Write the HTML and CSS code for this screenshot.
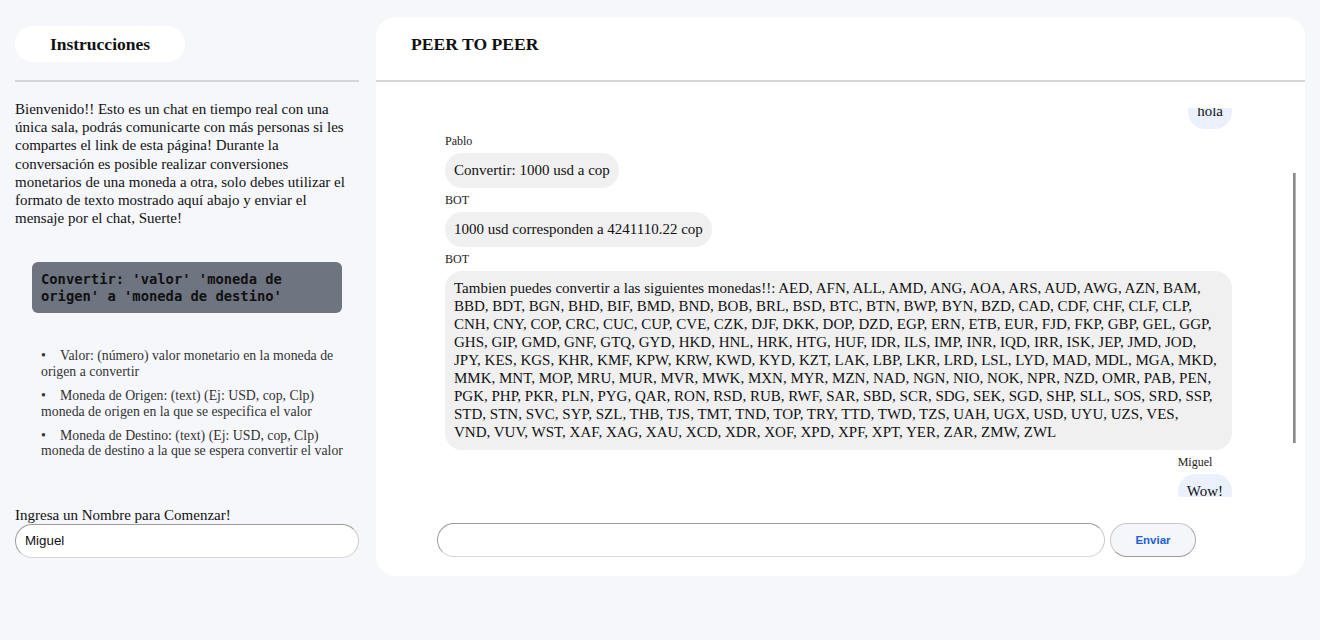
FILE: index.html
```html
<!DOCTYPE html>
<html lang="es">
<head>
<meta charset="utf-8">
<title>Peer to Peer</title>
<link rel="stylesheet" href="styles.css">
</head>
<body>
<div class="page">
  <aside class="sidebar">
    <h3 class="pill">Instrucciones</h3>
    <div class="rule"></div>
    <p class="intro">Bienvenido!! Esto es un chat en tiempo real con una única sala, podrás comunicarte con más personas si les compartes el link de esta página! Durante la conversación es posible realizar conversiones monetarios de una moneda a otra, solo debes utilizar el formato de texto mostrado aquí abajo y enviar el mensaje por el chat, Suerte!</p>
    <pre class="code">Convertir: 'valor' 'moneda de origen' a 'moneda de destino'</pre>
    <ul class="rules">
      <li>Valor: (número) valor monetario en la moneda de origen a convertir</li>
      <li>Moneda de Origen: (text) (Ej: USD, cop, Clp) moneda de origen en la que se especifica el valor</li>
      <li>Moneda de Destino: (text) (Ej: USD, cop, Clp) moneda de destino a la que se espera convertir el valor</li>
    </ul>
    <label class="name-label" for="name">Ingresa un Nombre para Comenzar!</label>
    <input class="name-input" id="name" type="text" value="Miguel">
  </aside>
  <main class="chat">
    <header class="chat-head"><h3 class="chat-title">PEER TO PEER</h3></header>
    <div class="rule"></div>
    <div class="msg-wrap">
      <div class="messages" id="messages">
        <div class="msg me"><span class="who">Miguel</span><div class="bubble">hola</div></div>
        <div class="msg"><span class="who">Pablo</span><div class="bubble">Convertir: 1000 usd a cop</div></div>
        <div class="msg"><span class="who">BOT</span><div class="bubble">1000 usd corresponden a 4241110.22 cop</div></div>
        <div class="msg"><span class="who">BOT</span><div class="bubble">Tambien puedes convertir a las siguientes monedas!!: AED, AFN, ALL, AMD, ANG, AOA, ARS, AUD, AWG, AZN, BAM, BBD, BDT, BGN, BHD, BIF, BMD, BND, BOB, BRL, BSD, BTC, BTN, BWP, BYN, BZD, CAD, CDF, CHF, CLF, CLP, CNH, CNY, COP, CRC, CUC, CUP, CVE, CZK, DJF, DKK, DOP, DZD, EGP, ERN, ETB, EUR, FJD, FKP, GBP, GEL, GGP, GHS, GIP, GMD, GNF, GTQ, GYD, HKD, HNL, HRK, HTG, HUF, IDR, ILS, IMP, INR, IQD, IRR, ISK, JEP, JMD, JOD, JPY, KES, KGS, KHR, KMF, KPW, KRW, KWD, KYD, KZT, LAK, LBP, LKR, LRD, LSL, LYD, MAD, MDL, MGA, MKD, MMK, MNT, MOP, MRU, MUR, MVR, MWK, MXN, MYR, MZN, NAD, NGN, NIO, NOK, NPR, NZD, OMR, PAB, PEN, PGK, PHP, PKR, PLN, PYG, QAR, RON, RSD, RUB, RWF, SAR, SBD, SCR, SDG, SEK, SGD, SHP, SLL, SOS, SRD, SSP, STD, STN, SVC, SYP, SZL, THB, TJS, TMT, TND, TOP, TRY, TTD, TWD, TZS, UAH, UGX, USD, UYU, UZS, VES,<br>VND, VUV, WST, XAF, XAG, XAU, XCD, XDR, XOF, XPD, XPF, XPT, YER, ZAR, ZMW, ZWL</div></div>
        <div class="msg me"><span class="who">Miguel</span><div class="bubble">Wow!</div></div>
      </div>
      <div class="scroll-thumb"></div>
    </div>
    <form class="composer">
      <input class="composer-input" type="text">
      <button class="send" type="button">Enviar</button>
    </form>
  </main>
</div>
<script src="script.js"></script>
</body>
</html>
```
FILE: styles.css
```css
* { box-sizing: border-box; }
body {
  margin: 0;
  background: #f6f7fb;
  font-family: "Liberation Serif", "Times New Roman", serif;
  font-size: 15px;
  line-height: 18px;
  color: #111;
}
.page {
  display: flex;
  gap: 17px;
  padding: 17px 15px;
}
.sidebar {
  width: 344px;
  flex: none;
  display: flex;
  flex-direction: column;
}
.pill {
  margin: 9px 0 0;
  width: 170px;
  height: 36px;
  border-radius: 18px;
  background: #fff;
  font-size: 17.5px;
  font-weight: bold;
  line-height: 36px;
  text-align: center;
}
.rule {
  height: 2px;
  background: #d5d6d8;
  flex: none;
}
.sidebar .rule { margin-top: 18px; }
.intro {
  margin: 18px 9px 0 0;
  font-size: 15px;
  line-height: 18.2px;
}
.code {
  margin: 35px 17px 0;
  padding: 9px 9px 8px;
  background: #6e7480;
  border-radius: 6px;
  font-family: "DejaVu Sans Mono", "Liberation Mono", monospace;
  font-weight: bold;
  font-size: 13.8px;
  line-height: 17px;
  color: #111;
  white-space: pre-wrap;
}
.rules {
  list-style: none;
  margin: 35px 8px 0 26px;
  padding: 0;
  font-size: 13.8px;
  line-height: 15.4px;
  color: #333;
}
.rules li { margin-bottom: 9px; }
.rules li:last-child { margin-bottom: 0; }
.rules li::before {
  content: "•";
  display: inline-block;
  width: 19px;
}
.name-label {
  margin-top: 47px;
  font-size: 15px;
  line-height: 18px;
}
.name-input {
  height: 34px;
  width: 100%;
  border: 1px solid #9c9c9c;
  border-bottom-color: #d8d8d8;
  border-right-color: #c9c9c9;
  border-radius: 17px;
  padding: 0 9px;
  background: #fff;
  font-family: "Liberation Sans", Arial, sans-serif;
  font-size: 13.33px;
  color: #111;
  outline: none;
}
.chat {
  flex: 1;
  height: 559px;
  background: #fff;
  border-radius: 20px;
  display: flex;
  flex-direction: column;
}
.chat-head {
  height: 63px;
  padding: 17px 35px 0;
  flex: none;
}
.chat-title {
  margin: 0;
  font-size: 17.6px;
  font-weight: bold;
  line-height: 20px;
}
.msg-wrap {
  position: relative;
  flex: none;
  margin: 26px 9px 0 0;
}
.messages {
  height: 389px;
  padding: 61px 64px 61px 69px;
  overflow-y: scroll;
  scrollbar-width: none;
  display: flex;
  flex-direction: column;
  align-items: flex-start;
}
.messages::-webkit-scrollbar { width: 0; height: 0; }
.scroll-thumb {
  position: absolute;
  top: 65px;
  right: 0;
  width: 3px;
  height: 270px;
  background: #8a8a8a;
  border-right: 1px solid #b4b4b4;
}
.msg {
  display: flex;
  flex-direction: column;
  align-items: flex-start;
  margin-bottom: 5px;
  flex: none;
}
.msg.me { align-self: flex-end; }
.who {
  font-size: 12px;
  line-height: 14px;
  margin-bottom: 5px;
  color: #222;
}
.bubble {
  background: #f0f0f0;
  border-radius: 17px;
  padding: 8px 9px 9px;
  font-size: 15px;
  line-height: 18px;
  color: #111;
}
.msg.me .bubble { background: #eaf1fd; }
.composer {
  display: flex;
  gap: 5px;
  margin: 26px 0 0;
  padding-left: 61px;
}
.composer-input {
  width: 668px;
  height: 34px;
  border: 1px solid #9c9c9c;
  border-bottom-color: #d8d8d8;
  border-right-color: #c9c9c9;
  border-radius: 17px;
  background: #fff;
  outline: none;
}
.send {
  width: 86px;
  height: 34px;
  border: 1px solid #c8c8c8;
  border-bottom-color: #9a9a9a;
  border-right-color: #a8a8a8;
  border-radius: 17px;
  background: #f5f6fa;
  font-family: "Liberation Sans", Arial, sans-serif;
  font-weight: bold;
  font-size: 11.5px;
  color: #1c5fd6;
  padding: 0;
}
```
FILE: script.js
```js
document.getElementById('messages').scrollTop = 94;
```
